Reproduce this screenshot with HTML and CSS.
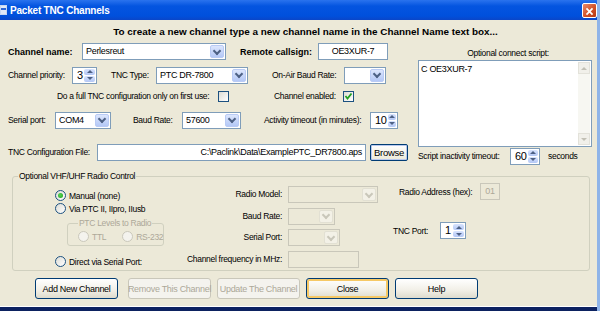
FILE: index.html
```html
<!DOCTYPE html>
<html lang="en">
<head>
  <meta charset="UTF-8" />
  <title>Packet TNC Channels</title>
  <link rel="stylesheet" href="styles.css">
</head>
<body>
  <div class="ventana">
    <div class="titulo">
      <span class="icono"></span>
      <span class="titulo-texto">Packet TNC Channels</span>
      <span class="cerrar">
        <svg width="15" height="15" viewBox="0 0 15 15"><path d="M4 4 L11 11 M11 4 L4 11" stroke="#fff" stroke-width="2"/></svg>
      </span>
    </div>

    <div class="aviso">To create a new channel type a new channel name in the Channel Name text box...</div>

    <div class="arriba">
      <div class="izq">
        <div class="fila f1">
          <span class="neg w-nombre">Channel name:</span>
          <span class="combo w144"><span class="val">Perlesreut</span><span class="drop"></span></span>
          <span class="neg w-remoto">Remote callsign:</span>
          <span class="caja w70 centro">OE3XUR-7</span>
        </div>
        <div class="fila f2">
          <span class="w-prio">Channel priority:</span>
          <span class="spin w25"><span class="val">3</span><span class="flechas"><i class="up"></i><i class="down"></i></span></span>
          <span class="w-tipo">TNC Type:</span>
          <span class="combo w92"><span class="val">PTC DR-7800</span><span class="drop"></span></span>
          <span class="w-onair">On-Air Baud Rate:</span>
          <span class="combo w42"><span class="val"></span><span class="drop"></span></span>
        </div>
        <div class="fila f3">
          <span class="w-full">Do a full TNC configuration only on first use:</span>
          <span class="check"></span>
          <span class="w-enabled">Channel enabled:</span>
          <span class="check marcado">
            <svg width="9" height="9" viewBox="0 0 9 9"><path d="M1.5 4 L3.5 6.5 L7.5 1.5" fill="none" stroke="#21a121" stroke-width="1.8"/></svg>
          </span>
        </div>
        <div class="fila f4">
          <span class="w-serial">Serial port:</span>
          <span class="combo w56"><span class="val">COM4</span><span class="drop"></span></span>
          <span class="w-baud">Baud Rate:</span>
          <span class="combo w59"><span class="val">57600</span><span class="drop"></span></span>
          <span class="w-activ">Activity timeout (in minutes):</span>
          <span class="spin w28"><span class="val">10</span><span class="flechas"><i class="up"></i><i class="down"></i></span></span>
        </div>
        <div class="fila f5">
          <span class="w-config">TNC Configuration File:</span>
          <span class="caja w269 derecha">C:\Paclink\Data\ExamplePTC_DR7800.aps</span>
          <span class="boton-browse">Browse</span>
        </div>
      </div>

      <div class="der">
        <div class="script-label">Optional connect script:</div>
        <div class="script">
          <span class="script-texto">C OE3XUR-7</span>
          <span class="scroll"><i class="up"></i><i class="down"></i></span>
        </div>
        <div class="fila f5">
          <span class="w-inact">Script inactivity timeout:</span>
          <span class="spin w30"><span class="val">60</span><span class="flechas"><i class="up"></i><i class="down"></i></span></span>
          <span class="segundos">seconds</span>
        </div>
      </div>
    </div>

    <fieldset class="grupo">
      <legend>Optional VHF/UHF Radio Control</legend>
      <div class="grupo-cuerpo">
        <div class="radios">
          <div class="radio-fila"><span class="radio marcado"></span>Manual (none)</div>
          <div class="radio-fila"><span class="radio"></span>Via PTC II, IIpro, IIusb</div>
          <fieldset class="subgrupo">
            <legend>PTC Levels to Radio</legend>
            <div class="sub-fila">
              <span class="radio-fila apagado"><span class="radio"></span>TTL</span>
              <span class="radio-fila apagado"><span class="radio"></span>RS-232</span>
            </div>
          </fieldset>
          <div class="radio-fila"><span class="radio"></span>Direct via Serial Port:</div>
        </div>

        <div class="radio-datos">
          <span class="etq">Radio Model:</span>
          <span class="combo off w90"><span class="val"></span><span class="drop"></span></span>
          <span class="etq">Baud Rate:</span>
          <span class="combo off w47"><span class="val"></span><span class="drop"></span></span>
          <span class="etq">Serial Port:</span>
          <span class="combo off w52"><span class="val"></span><span class="drop"></span></span>
          <span class="etq">Channel frequency in MHz:</span>
          <span class="caja off w71"></span>
        </div>

        <div class="radio-extra">
          <div class="fila dir">
            <span>Radio Address (hex):</span>
            <span class="caja off w20 centro">01</span>
          </div>
          <div class="fila puerto">
            <span>TNC Port:</span>
            <span class="spin w26"><span class="val">1</span><span class="flechas"><i class="up"></i><i class="down"></i></span></span>
          </div>
        </div>
      </div>
    </fieldset>

    <div class="botones">
      <span class="boton">Add New Channel</span>
      <span class="boton apagado">Remove This Channel</span>
      <span class="boton apagado">Update The Channel</span>
      <span class="boton defecto">Close</span>
      <span class="boton">Help</span>
    </div>

    <div class="barra"></div>
  </div>
</body>
</html>
```

FILE: styles.css
```css
* {
  box-sizing: border-box;
  margin: 0;
  padding: 0;
}

body {
  background-color: #ece9d8;
  font-family: "Liberation Sans", Arial, sans-serif;
  font-size: 8.5px;
  letter-spacing: -0.3px;
  color: #000;
}

.ventana {
  width: 600px;
  height: 311px;
  display: flex;
  flex-direction: column;
  background-color: #ece9d8;
  border-right: 3px solid #8fb4e8;
  overflow: hidden;
}

.titulo {
  height: 20px;
  display: flex;
  align-items: center;
  background: linear-gradient(#2a73ee, #0455e0 30%, #0050dc 80%, #0a46c8);
  color: #fff;
}

.icono {
  width: 7px;
  height: 10px;
  background: linear-gradient(#dfe8f8 0 30%, #2e66d6 30% 50%, #dfe8f8 50%);
  border: 1px solid #c9d7f0;
}

.titulo-texto {
  margin-left: 3px;
  font-weight: bold;
  font-size: 10px;
  letter-spacing: -0.2px;
}

.cerrar {
  margin-left: auto;
  margin-right: 0;
  width: 15px;
  height: 15px;
  display: flex;
  background: linear-gradient(135deg, #e98a6c, #d04e24 60%, #b43a15);
  border: 1px solid #fff;
  border-radius: 2px;
}

.aviso {
  margin-top: 6px;
  text-align: center;
  font-weight: bold;
  font-size: 9.9px;
  letter-spacing: 0;
  padding-left: 14px;
  height: 14px;
}

.neg {
  font-weight: bold;
  font-size: 9px;
  letter-spacing: 0;
}

/* parte de arriba */
.arriba {
  display: flex;
  padding-left: 8px;
  margin-top: 2px;
}

.izq {
  width: 410px;
}

.der {
  width: 174px;
}

.fila {
  display: flex;
  align-items: center;
  white-space: nowrap;
}

.fila > span {
  flex-shrink: 0;
}

.f1 { height: 19px; }
.f2 { height: 18px; margin-top: 5px; }
.f3 { height: 14px; margin-top: 5px; }
.f4 { height: 18px; margin-top: 8px; }
.f5 { height: 18px; margin-top: 14px; }
.der .f5 { margin-top: 0; }

.w-nombre { width: 74px; }
.w-remoto { width: 78px; margin-left: 14px; }
.w-prio { width: 64px; }
.w-tipo { width: 45px; margin-left: 14px; }
.w-onair { width: 72px; margin-left: 24px; }
.w-full { margin-left: 49px; width: 155px; }
.w-enabled { margin-left: 45px; width: 63px; }
.w-serial { width: 47px; }
.w-baud { width: 49px; margin-left: 22px; }
.w-activ { width: 106px; margin-left: 23px; }
.w-config { width: 89px; }
.w-inact { width: 92px; }
.segundos { margin-left: 8px; }

.w20 { width: 20px; }
.w25 { width: 25px; }
.w26 { width: 26px; }
.w28 { width: 28px; }
.w30 { width: 30px; }
.w42 { width: 42px; }
.w47 { width: 47px; }
.w52 { width: 52px; }
.w56 { width: 56px; }
.w59 { width: 59px; }
.w70 { width: 70px; }
.w71 { width: 71px; }
.w90 { width: 90px; }
.w92 { width: 92px; }
.w144 { width: 144px; }
.w269 { width: 269px; }

/* controles */
.combo, .caja, .spin {
  display: inline-flex;
  height: 17px;
  background-color: #fff;
  border: 1px solid #7f9db9;
  line-height: 15px;
  font-size: 9px;
}

.combo .val, .spin .val {
  flex: 1;
  padding-left: 3px;
}

.caja {
  padding: 0 3px;
}

.centro { justify-content: center; }
.derecha { justify-content: flex-end; }

.drop {
  width: 14px;
  margin: 1px;
  border-radius: 2px;
  border: 1px solid #b9cbf5;
  background: linear-gradient(#dce6fd, #b4c8f6);
  display: flex;
  align-items: center;
  justify-content: center;
}

.drop::after {
  content: "";
  width: 4px;
  height: 4px;
  border-right: 2px solid #4d6185;
  border-bottom: 2px solid #4d6185;
  transform: translateY(-1px) rotate(45deg);
}

.off {
  background-color: #ece9d8;
  border-color: #c9c7ba;
  color: #aca899;
}

.off .drop {
  border-color: #e2e0d3;
  background: #f3f1e7;
}

.off .drop::after {
  border-color: #c9c7ba;
}

.spin .val {
  padding-left: 4px;
  font-size: 11px;
}

.flechas, .scroll {
  width: 11px;
  display: flex;
  flex-direction: column;
  margin: 1px;
  gap: 1px;
}

.flechas i {
  flex: 1;
  border-radius: 2px;
  background: linear-gradient(#d7e3fd, #b3c7f5);
  display: flex;
  align-items: center;
  justify-content: center;
}

.flechas .up::after, .scroll .up::after {
  content: "";
  border-left: 3px solid transparent;
  border-right: 3px solid transparent;
  border-bottom: 3px solid #4d6185;
}

.flechas .down::after, .scroll .down::after {
  content: "";
  border-left: 3px solid transparent;
  border-right: 3px solid transparent;
  border-top: 3px solid #4d6185;
}

.check {
  width: 11px;
  height: 11px;
  margin-left: 6px;
  border: 1px solid #1c5180;
  background: linear-gradient(135deg, #dcdcd5, #fff);
  display: flex;
  align-items: center;
  justify-content: center;
}

.boton-browse {
  margin-left: 4px;
  width: 38px;
  height: 17px;
  border: 1px solid #003c74;
  border-radius: 2px;
  background: linear-gradient(#fff, #ece9d8);
  box-shadow: inset 0 0 0 1px #b9c8ee;
  display: flex;
  align-items: center;
  justify-content: center;
  font-size: 9.5px;
}

.script-label {
  height: 18px;
  padding-top: 6px;
  text-align: center;
  padding-left: 6px;
}

.script {
  height: 87px;
  background-color: #fff;
  border: 1px solid #7f9db9;
  display: flex;
  justify-content: space-between;
  font-size: 9px;
}

.script-texto {
  padding: 3px 2px;
}

.scroll {
  width: 12px;
  justify-content: space-between;
  background-color: #f7f7f2;
}

.scroll i {
  height: 12px;
  background-color: #f1f0ea;
  border: 1px solid #e3e2da;
  display: flex;
  align-items: center;
  justify-content: center;
}

.scroll .up::after { border-bottom-color: #c2c0b5; }
.scroll .down::after { border-top-color: #c2c0b5; }

/* grupo de radio */
.grupo {
  margin: 6px 0 0 12px;
  width: 578px;
  height: 100px;
  border: 1px solid #d0d0bf;
  border-radius: 3px;
  padding: 0 0 0 42px;
}

.grupo legend {
  margin-left: -37px;
  padding: 0 1px;
}

.grupo-cuerpo {
  display: flex;
}

.radios {
  width: 130px;
  padding-top: 8px;
}

.radio-fila {
  display: flex;
  align-items: center;
  height: 13px;
  white-space: nowrap;
}

.radio {
  width: 11px;
  height: 11px;
  margin-right: 3px;
  border-radius: 50%;
  border: 1px solid #1c5180;
  background: linear-gradient(135deg, #dcdcd5, #fff);
  display: inline-flex;
  align-items: center;
  justify-content: center;
}

.radio.marcado::after {
  content: "";
  width: 5px;
  height: 5px;
  border-radius: 50%;
  background: radial-gradient(circle at 40% 40%, #55d455, #21a121);
}

.subgrupo {
  margin: 3px 0 9px 12px;
  width: 93px;
  height: 28px;
  border: 1px solid #d0d0bf;
  border-radius: 3px;
  padding: 0 0 0 10px;
  color: #aca899;
}

.subgrupo legend {
  margin-left: 0;
  padding: 0 1px;
}

.sub-fila {
  display: flex;
  gap: 16px;
  margin-top: 2px;
}

.apagado .radio {
  border-color: #cac8bb;
  background: #f4f3ee;
}

.radio-datos {
  display: grid;
  grid-template-columns: 97px auto;
  column-gap: 6px;
  row-gap: 4px;
  align-items: center;
  justify-items: start;
  padding-top: 5px;
}

.radio-datos .etq {
  justify-self: end;
  height: 17px;
  line-height: 17px;
  white-space: nowrap;
}

.radio-extra {
  margin-left: 15px;
  padding-top: 2px;
}

.dir span:first-child { margin-left: 6px; width: 81px; }
.puerto { margin-top: 22px; }
.puerto span:first-child { width: 47px; }

/* botones */
.botones {
  display: flex;
  gap: 6px;
  margin-top: 7px;
  padding-left: 35px;
}

.boton {
  width: 83px;
  height: 21px;
  border: 1px solid #003c74;
  border-radius: 3px;
  background: linear-gradient(#fff, #f1efe6 60%, #dedbcd);
  display: flex;
  align-items: center;
  justify-content: center;
  white-space: nowrap;
  font-size: 9px;
}

.boton:first-child { margin-right: 4px; }

.boton.apagado {
  border-color: #c9c7ba;
  color: #aca899;
  background: #f4f3ee;
}

.boton.defecto {
  box-shadow: inset 0 0 0 2px #f6c966;
}

.barra {
  margin-top: auto;
  height: 5px;
  border-top: 1px solid #fff;
  background-color: #0c2260;
}
```
